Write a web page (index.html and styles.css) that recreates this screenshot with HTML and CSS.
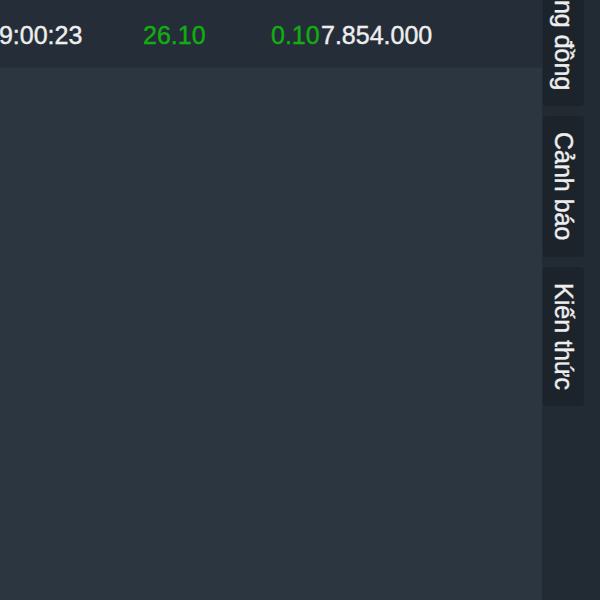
FILE: index.html
```html
<!DOCTYPE html>
<html lang="vi">
<head>
  <meta charset="UTF-8">
  <meta name="viewport" content="width=device-width, initial-scale=1.0">
  <title>Bảng giá</title>
  <link rel="stylesheet" href="styles.css">
</head>
<body>
  <div class="layout">
    <main class="board">
      <div class="row">
        <span class="cell time">09:00:23</span>
        <span class="cell price up">26.10</span>
        <span class="cell change up">0.10</span>
        <span class="cell volume">7.854.000</span>
      </div>
    </main>

    <aside class="side">
      <div class="tabs">
        <div class="tab">Cộng đồng</div>
        <div class="tab">Cảnh báo</div>
        <div class="tab">Kiến thức</div>
      </div>
    </aside>
  </div>
</body>
</html>
```

FILE: styles.css
```css
:root {
  --bg: #2b3641;
  --row: #252e38;
  --side: #222a33;
  --tab: #1c232b;
  --text: #eeeeee;
  --up: #12ad12;
}

* {
  margin: 0;
  padding: 0;
  box-sizing: border-box;
}

body {
  width: 600px;
  height: 600px;
  overflow: hidden;
  background-color: var(--bg);
  color: var(--text);
  font-family: "Liberation Sans", Arial, sans-serif;
}

.layout {
  display: flex;
  height: 100%;
}

.board {
  flex: 1;
  overflow: hidden;
}

.row {
  display: flex;
  align-items: center;
  height: 68px;
  padding-top: 3px;
  margin-left: -15px;
  background-color: var(--row);
  border-bottom: 1px solid #28313b;
  font-size: 25px;
  white-space: nowrap;
  -webkit-text-stroke: 0.4px currentColor;
}

.cell.time {
  width: 158px;
}

.cell.price {
  width: 128px;
}

.cell.change {
  width: 50px;
}

.up {
  color: var(--up);
}

.side {
  width: 58px;
  background-color: var(--side);
  overflow: hidden;
  padding-left: 1px;
}

.tabs {
  display: flex;
  flex-direction: column;
  gap: 10px;
  margin-top: -48px;
}

.tab {
  width: 41px;
  padding: 16px 0;
  background-color: var(--tab);
  border-radius: 4px;
  writing-mode: vertical-rl;
  font-size: 25px;
  line-height: 41px;
  white-space: nowrap;
  -webkit-text-stroke: 0.4px currentColor;
}
```
